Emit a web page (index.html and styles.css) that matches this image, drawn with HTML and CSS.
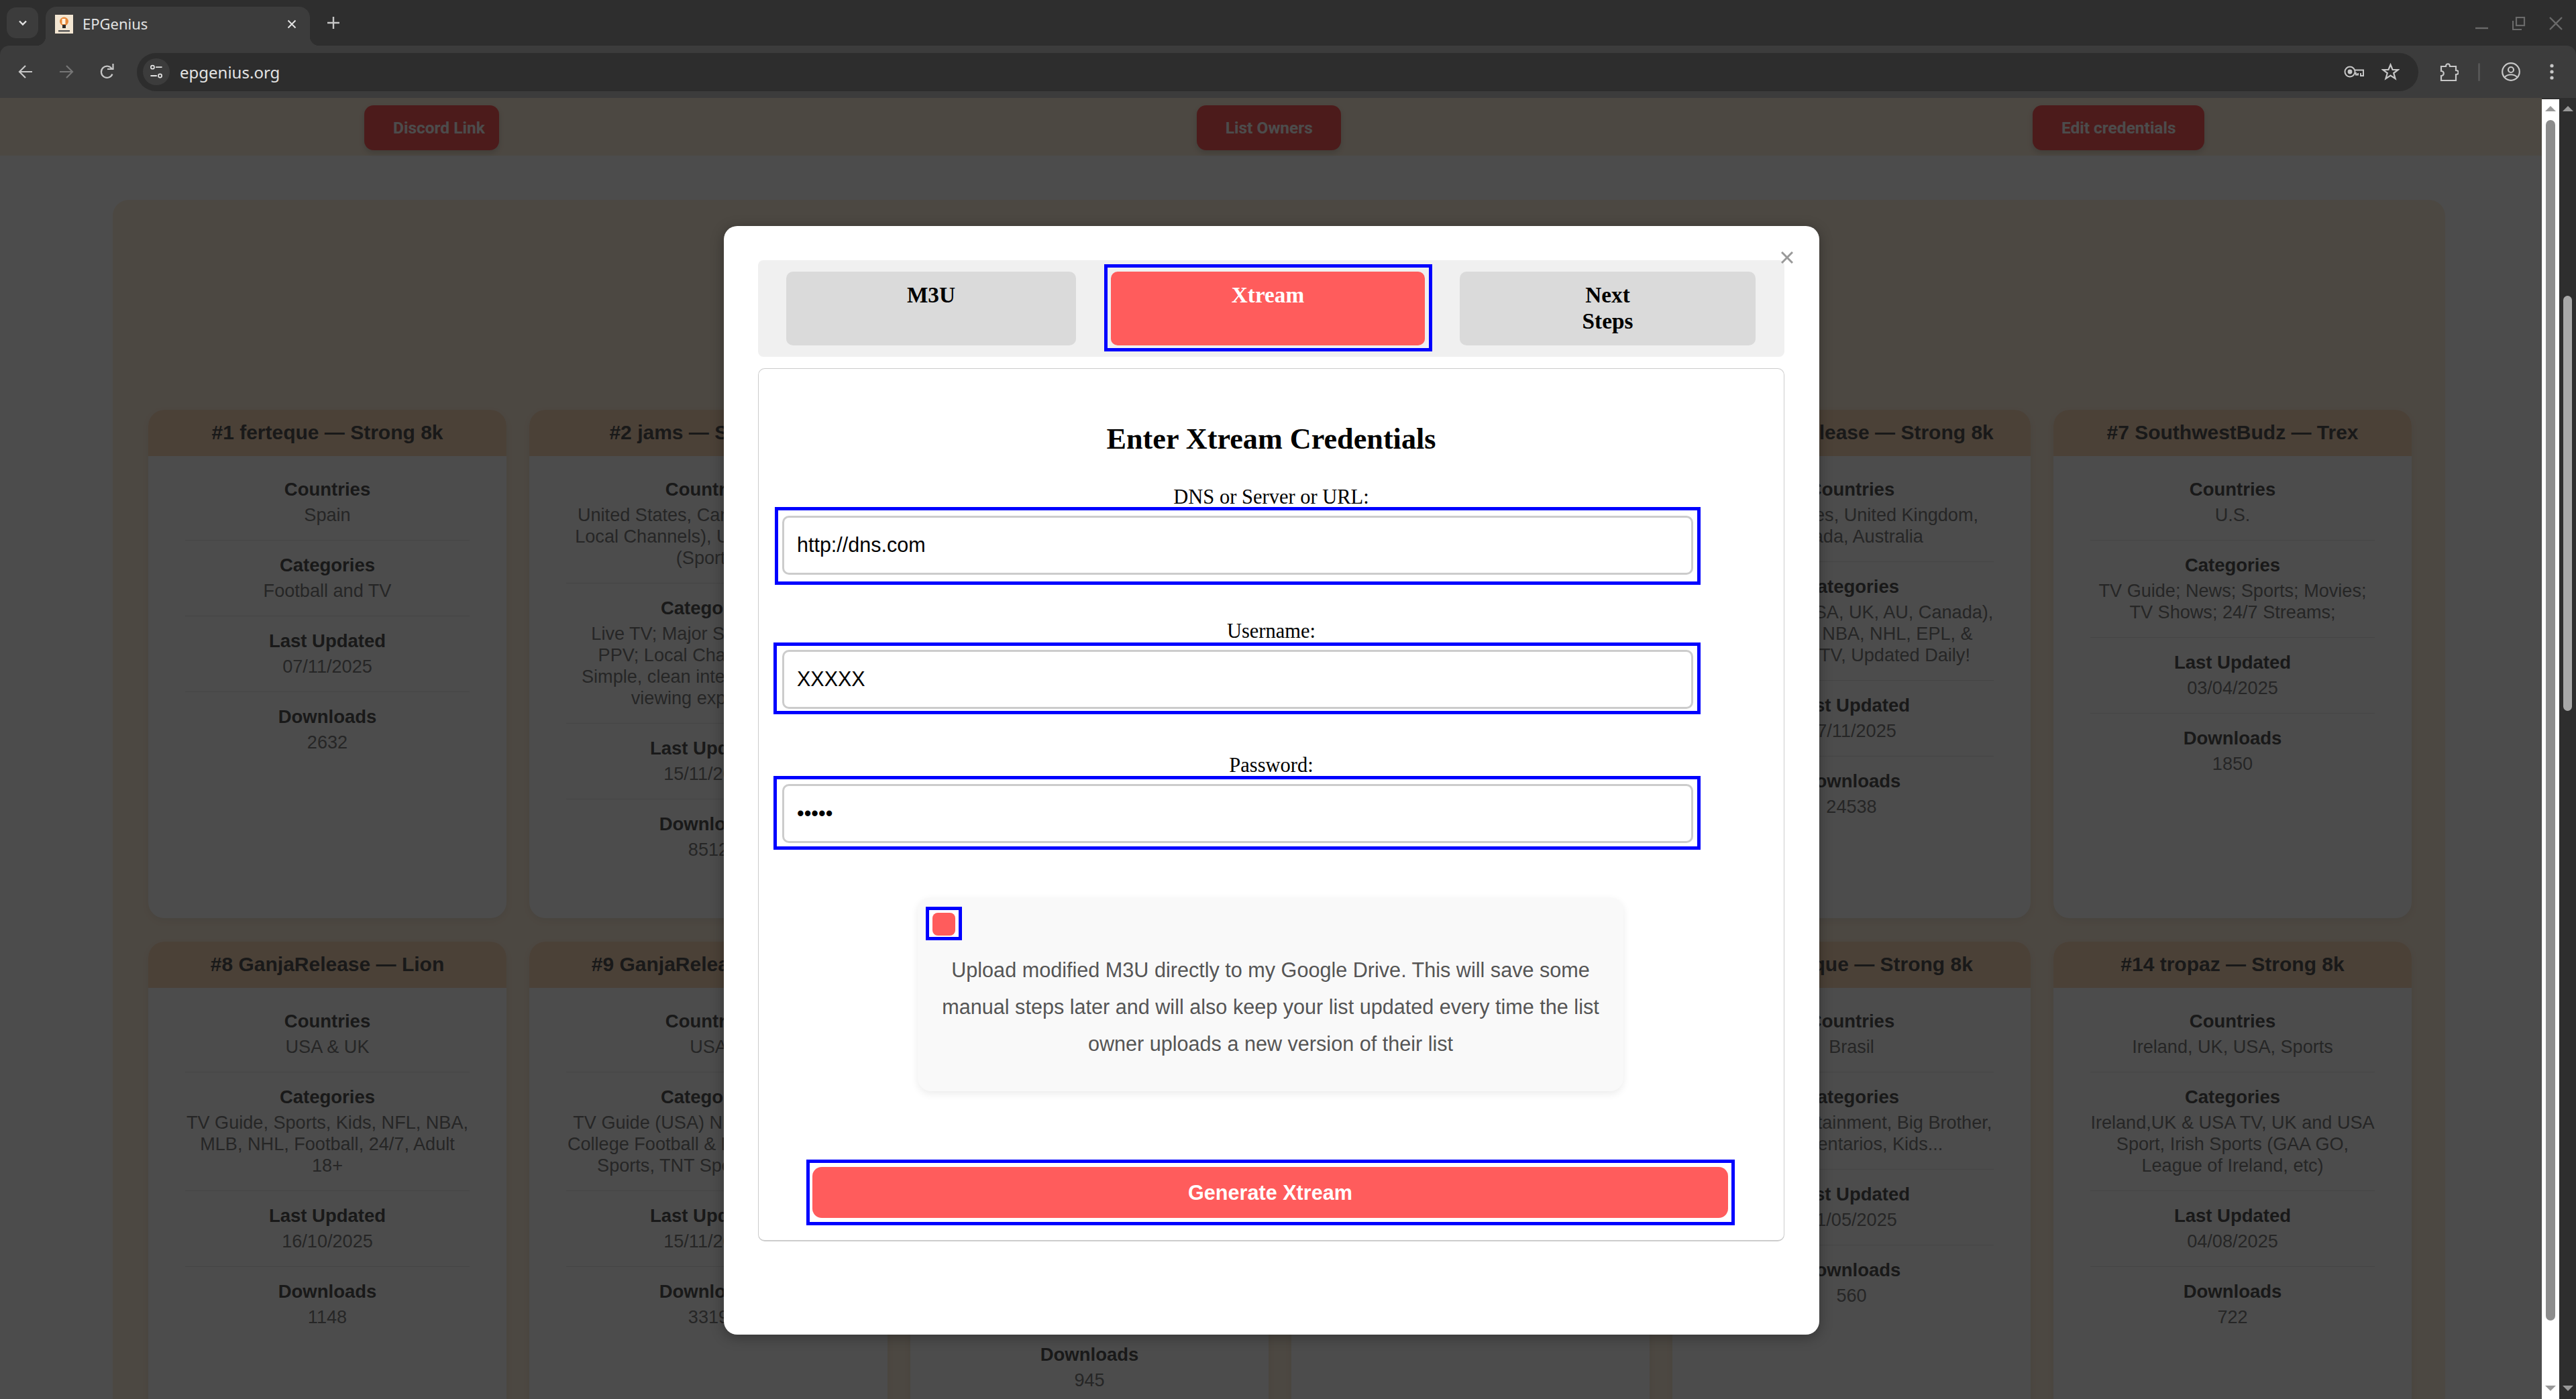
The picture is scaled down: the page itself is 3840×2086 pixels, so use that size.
FILE: index.html
```html
<!DOCTYPE html>
<html lang="en">
<head>
    <meta charset="UTF-8" />
    <title>EPGenius</title>
    <link rel="stylesheet" href="styles.css">
</head>
<body>

    <div class="tabstrip">
        <div class="tab-search">
            <svg width="16" height="16" viewBox="0 0 16 16"><path d="M3 5.5 8 10.5 13 5.5" fill="none" stroke="#e3e3e3" stroke-width="2.4"/></svg>
        </div>
        <div class="tab">
            <svg class="favicon" width="27" height="28" viewBox="0 0 27 28">
                <rect width="27" height="28" fill="#f3e6d2"/>
                <circle cx="13.5" cy="10" r="6.5" fill="#e8893a"/>
                <rect x="10.5" y="6" width="5" height="8" fill="#fff3e0"/>
                <rect x="11" y="15" width="5" height="5" fill="#2b2b2b"/>
                <rect x="5" y="23" width="17" height="2.4" fill="#555"/>
            </svg>
            <span class="tab-title">EPGenius</span>
            <svg class="tab-close" width="14" height="14" viewBox="0 0 14 14"><path d="M1.5 1.5 12.5 12.5M12.5 1.5 1.5 12.5" stroke="#e3e3e3" stroke-width="2"/></svg>
        </div>
        <svg class="new-tab" width="18" height="18" viewBox="0 0 18 18"><path d="M9 0V18M0 9H18" stroke="#c7c7c7" stroke-width="2.4"/></svg>
        <div class="window-controls">
            <svg width="20" height="20" viewBox="0 0 20 20"><path d="M0 17H19" stroke="#6a6a6a" stroke-width="2.4"/></svg>
            <svg width="20" height="20" viewBox="0 0 20 20"><path d="M1 6V19H14" fill="none" stroke="#6a6a6a" stroke-width="2.2"/><rect x="6" y="1" width="12" height="12" fill="none" stroke="#6a6a6a" stroke-width="2.2"/></svg>
            <svg width="20" height="20" viewBox="0 0 20 20"><path d="M1 1 19 19M19 1 1 19" stroke="#6a6a6a" stroke-width="2.4"/></svg>
        </div>
    </div>

    <div class="toolbar">
        <svg class="nav-icon" width="22" height="22" viewBox="0 0 22 22"><path d="M21 11H3M11 2 2 11 11 20" fill="none" stroke="#c7c7c7" stroke-width="2.2"/></svg>
        <svg class="nav-icon" width="22" height="22" viewBox="0 0 22 22"><path d="M1 11H19M11 2 20 11 11 20" fill="none" stroke="#767676" stroke-width="2.2"/></svg>
        <svg class="nav-icon" width="22" height="24" viewBox="0 0 22 24"><path d="M18.5 15.5A8.6 8.6 0 1 1 18 8" fill="none" stroke="#c7c7c7" stroke-width="2.2"/><path d="M11 8H19.5V0" fill="none" stroke="#c7c7c7" stroke-width="2.2"/></svg>
        <div class="omnibox">
            <div class="site-info">
                <svg width="22" height="28" viewBox="0 0 22 28">
                    <circle cx="4.5" cy="6" r="3" fill="none" stroke="#e3e3e3" stroke-width="2"/>
                    <path d="M10 6H21M1 21H12" stroke="#e3e3e3" stroke-width="2.2"/>
                    <circle cx="17.5" cy="21" r="3" fill="none" stroke="#e3e3e3" stroke-width="2"/>
                </svg>
            </div>
            <span class="url">epgenius.org</span>
            <svg class="key-icon" width="30" height="18" viewBox="0 0 30 18">
                <circle cx="9" cy="9" r="7.5" fill="none" stroke="#c7c7c7" stroke-width="2"/>
                <circle cx="9" cy="9" r="3.4" fill="#c7c7c7"/>
                <path d="M16.5 6.5H29V15H25V11M21 11V13.5H18V11H16.5" fill="none" stroke="#c7c7c7" stroke-width="2"/>
            </svg>
            <svg class="star-icon" width="27" height="26" viewBox="0 0 27 26"><path d="M13.5 2.5 16.6 10H24.8L18.2 15 20.6 23.2 13.5 18.5 6.4 23.2 8.8 15 2.2 10H10.4Z" fill="none" stroke="#c7c7c7" stroke-width="2.2"/></svg>
        </div>
        <svg class="ext-icon" width="28" height="30" viewBox="0 0 28 30"><path d="M2 7H9C9 2 15 2 15 7H24V13C29 13 29 19 24 19V28H2V21C7 21 7 14 2 14Z" fill="none" stroke="#c7c7c7" stroke-width="2.2"/></svg>
        <div class="toolbar-sep"></div>
        <svg class="profile-icon" width="28" height="28" viewBox="0 0 28 28">
            <circle cx="14" cy="14" r="12.8" fill="none" stroke="#c7c7c7" stroke-width="2.2"/>
            <circle cx="14" cy="11" r="4" fill="none" stroke="#c7c7c7" stroke-width="2.2"/>
            <path d="M4.5 22C10 17 18 17 23.5 22" fill="none" stroke="#c7c7c7" stroke-width="2.2"/>
        </svg>
        <svg class="menu-icon" width="6" height="24" viewBox="0 0 6 24"><circle cx="3" cy="3" r="2.6" fill="#c7c7c7"/><circle cx="3" cy="12" r="2.6" fill="#c7c7c7"/><circle cx="3" cy="21" r="2.6" fill="#c7c7c7"/></svg>
    </div>

    <div class="viewport">
        <div class="page">
            <nav class="top-band">
                <a class="top-btn discord-btn">Discord Link</a>
                <a class="top-btn owners-btn">List Owners</a>
                <a class="top-btn creds-btn">Edit credentials</a>
            </nav>

            <section class="list-panel">
                <div class="card-grid">

                    <article class="card">
                        <h3 class="card-title">#1 ferteque — Strong 8k</h3>
                        <div class="card-body">
                            <div class="info"><b>Countries</b><span>Spain</span></div>
                            <div class="info"><b>Categories</b><span>Football and TV</span></div>
                            <div class="info"><b>Last Updated</b><span>07/11/2025</span></div>
                            <div class="info"><b>Downloads</b><span>2632</span></div>
                        </div>
                    </article>

                    <article class="card">
                        <h3 class="card-title">#2 jams — Strong 8k</h3>
                        <div class="card-body">
                            <div class="info"><b>Countries</b><span>United States, Canada (with US,<br>Local Channels), UK, Spain, Italy<br>(Sports)</span></div>
                            <div class="info"><b>Categories</b><span>Live TV; Major Sports; News;<br>PPV; Local Channels; VOD<br>Simple, clean interface for easy<br>viewing experience</span></div>
                            <div class="info"><b>Last Updated</b><span>15/11/2025</span></div>
                            <div class="info"><b>Downloads</b><span>8512</span></div>
                        </div>
                    </article>

                    <article class="card"></article>
                    <article class="card"></article>

                    <article class="card">
                        <h3 class="card-title">#6 GanjaRelease — Strong 8k</h3>
                        <div class="card-body">
                            <div class="info"><b>Countries</b><span>United States, United Kingdom,<br>Canada, Australia</span></div>
                            <div class="info"><b>Categories</b><span>Sports TV (USA, UK, AU, Canada),<br>MLB, NFL, NBA, NHL, EPL, &amp;<br>Plus More TV, Updated Daily!</span></div>
                            <div class="info"><b>Last Updated</b><span>07/11/2025</span></div>
                            <div class="info"><b>Downloads</b><span>24538</span></div>
                        </div>
                    </article>

                    <article class="card">
                        <h3 class="card-title">#7 SouthwestBudz — Trex</h3>
                        <div class="card-body">
                            <div class="info"><b>Countries</b><span>U.S.</span></div>
                            <div class="info"><b>Categories</b><span>TV Guide; News; Sports; Movies;<br>TV Shows; 24/7 Streams;</span></div>
                            <div class="info"><b>Last Updated</b><span>03/04/2025</span></div>
                            <div class="info"><b>Downloads</b><span>1850</span></div>
                        </div>
                    </article>

                    <article class="card">
                        <h3 class="card-title">#8 GanjaRelease — Lion</h3>
                        <div class="card-body">
                            <div class="info"><b>Countries</b><span>USA &amp; UK</span></div>
                            <div class="info"><b>Categories</b><span>TV Guide, Sports, Kids, NFL, NBA,<br>MLB, NHL, Football, 24/7, Adult<br>18+</span></div>
                            <div class="info"><b>Last Updated</b><span>16/10/2025</span></div>
                            <div class="info"><b>Downloads</b><span>1148</span></div>
                        </div>
                    </article>

                    <article class="card">
                        <h3 class="card-title">#9 GanjaRelease — Lion</h3>
                        <div class="card-body">
                            <div class="info"><b>Countries</b><span>USA</span></div>
                            <div class="info"><b>Categories</b><span>TV Guide (USA) NFL, NBA, MLB,<br>College Football &amp; Basketball, NFL<br>Sports, TNT Sports, Movies</span></div>
                            <div class="info"><b>Last Updated</b><span>15/11/2025</span></div>
                            <div class="info"><b>Downloads</b><span>3319</span></div>
                        </div>
                    </article>

                    <!-- only the foot of this card shows below the modal -->
                    <article class="card">
                        <div class="card-body card-foot">
                            <div class="info"><b>Downloads</b><span>945</span></div>
                        </div>
                    </article>

                    <article class="card"></article>

                    <article class="card">
                        <h3 class="card-title">#13 ferteque — Strong 8k</h3>
                        <div class="card-body">
                            <div class="info"><b>Countries</b><span>Brasil</span></div>
                            <div class="info"><b>Categories</b><span>Sports, Entertainment, Big Brother,<br>Documentarios, Kids...</span></div>
                            <div class="info"><b>Last Updated</b><span>21/05/2025</span></div>
                            <div class="info"><b>Downloads</b><span>560</span></div>
                        </div>
                    </article>

                    <article class="card">
                        <h3 class="card-title">#14 tropaz — Strong 8k</h3>
                        <div class="card-body">
                            <div class="info"><b>Countries</b><span>Ireland, UK, USA, Sports</span></div>
                            <div class="info"><b>Categories</b><span>Ireland,UK &amp; USA TV, UK and USA<br>Sport, Irish Sports (GAA GO,<br>League of Ireland, etc)</span></div>
                            <div class="info"><b>Last Updated</b><span>04/08/2025</span></div>
                            <div class="info"><b>Downloads</b><span>722</span></div>
                        </div>
                    </article>

                </div>
            </section>

            <div class="overlay">
                <div class="modal">
                    <svg class="modal-close" width="18" height="18" viewBox="0 0 18 18"><path d="M1 1 17 17M17 1 1 17" stroke="#999" stroke-width="3"/></svg>

                    <div class="tab-bar">
                        <button class="mode-tab">M3U</button>
                        <button class="mode-tab active ring ring-tab">Xtream</button>
                        <button class="mode-tab"><span>Next<br>Steps</span></button>
                    </div>

                    <div class="form-panel">
                        <h2>Enter Xtream Credentials</h2>

                        <label class="field-label">DNS or Server or URL:</label>
                        <div class="ring ring-dns"><input class="text-input" type="text" value="http://dns.com"></div>

                        <label class="field-label">Username:</label>
                        <div class="ring ring-user"><input class="text-input" type="text" value="XXXXX"></div>

                        <label class="field-label">Password:</label>
                        <div class="ring ring-pass"><input class="text-input" type="password" value="XXXXX"></div>

                        <div class="drive-box">
                            <span class="check-ring"><input class="drive-check" type="checkbox"></span>
                            <p>Upload modified M3U directly to my Google Drive. This will save some manual steps later and will also keep your list updated every time the list owner uploads a new version of their list</p>
                        </div>

                        <button class="generate-btn ring ring-generate">Generate Xtream</button>
                    </div>
                </div>
            </div>
        </div>

        <div class="scrollbar page-scrollbar">
            <i class="arrow-up"></i>
            <i class="thumb"></i>
            <i class="arrow-down"></i>
        </div>
        <div class="scrollbar window-scrollbar">
            <i class="arrow-up"></i>
            <i class="thumb"></i>
            <i class="arrow-down"></i>
        </div>
    </div>

</body>
</html>
```

FILE: styles.css
```css
* {
    box-sizing: border-box;
}
body {
    margin: 0;
    height: 2086px;
    overflow: hidden;
    display: flex;
    flex-direction: column;
    font-family: "Liberation Sans", Arial, sans-serif;
    background-color: #2e2e2e;
}

/* browser chrome */
.tabstrip {
    height: 68px;
    flex: none;
    display: flex;
    align-items: flex-start;
    background-color: #2e2e2e;
    padding-left: 10px;
}
.tab-search {
    width: 47px;
    height: 46px;
    margin-top: 11px;
    border-radius: 14px;
    background-color: #3c3c3c;
    display: flex;
    align-items: center;
    justify-content: center;
}
.tab {
    width: 394px;
    height: 58px;
    margin: 10px 0 0 11px;
    padding: 0 20px 0 14px;
    border-radius: 16px 16px 0 0;
    background-color: #3c3c3c;
    display: flex;
    align-items: center;
    position: relative;
}
.tab::before, .tab::after {
    content: "";
    position: absolute;
    bottom: 0;
    width: 14px;
    height: 14px;
}
.tab::before {
    left: -14px;
    background: radial-gradient(circle at 0 0, transparent 14px, #3c3c3c 14.5px);
}
.tab::after {
    right: -14px;
    background: radial-gradient(circle at 100% 0, transparent 14px, #3c3c3c 14.5px);
}
.favicon {
    flex: none;
    margin-bottom: 6px;
}
.tab-title {
    margin: 0 0 8px 14px;
    flex: 1;
    color: #e3e3e3;
    font-family: "Noto Sans", sans-serif;
    font-size: 22px;
}
.tab-close {
    margin-bottom: 6px;
}
.new-tab {
    margin: 25px 0 0 26px;
}
.window-controls {
    margin-left: auto;
    margin-top: 25px;
    padding-right: 20px;
    display: flex;
    gap: 35px;
}
.toolbar {
    height: 78px;
    flex: none;
    display: flex;
    align-items: center;
    background-color: #3c3c3c;
    border-radius: 14px 14px 0 0;
    padding: 0 34px 0 27px;
}
.nav-icon {
    flex: none;
    margin-right: 39px;
}
.omnibox {
    width: 3401px;
    height: 57px;
    margin-left: -6px;
    border-radius: 29px;
    background-color: #2d2d2d;
    display: flex;
    align-items: center;
    padding: 0 28px 0 9px;
    flex: none;
}
.site-info {
    width: 40px;
    height: 40px;
    border-radius: 50%;
    background-color: #3c3c3c;
    display: flex;
    align-items: center;
    justify-content: center;
}
.site-info svg {
    width: 20px;
    height: 24px;
}
.url {
    margin-left: 15px;
    flex: 1;
    color: #e3e3e3;
    font-family: "Noto Sans", sans-serif;
    font-size: 24px;
}
.star-icon {
    margin-left: 26px;
}
.ext-icon {
    margin-left: 32px;
    flex: none;
}
.toolbar-sep {
    width: 3px;
    height: 27px;
    margin-left: 29px;
    background-color: #555;
    border-radius: 2px;
    flex: none;
}
.profile-icon {
    margin-left: 32px;
    flex: none;
}
.menu-icon {
    margin-left: 44px;
    flex: none;
}

/* the page */
.viewport {
    flex: 1;
    min-height: 0;
    display: flex;
}
.page {
    flex: 1;
    min-width: 0;
    position: relative;
    overflow: hidden;
    background-color: #fff;
}
.top-band {
    height: 86px;
    background-color: #fff0dc;
    display: flex;
    padding: 11px 0 0 543px;
}
.top-btn {
    height: 67px;
    padding: 0 21px 0 43px;
    border-radius: 14px;
    background-color: #ff5c5c;
    color: #fff;
    font-family: Roboto, sans-serif;
    font-weight: 700;
    font-size: 24.5px;
    line-height: 67px;
    box-shadow: 0 4px 8px rgba(0,0,0,0.15);
    white-space: nowrap;
}
.owners-btn {
    margin-left: 1040px;
    padding-right: 42px;
}
.creds-btn {
    margin-left: 1031px;
    padding-right: 42px;
}
.list-panel {
    margin: 66px 144px 0 168px;
    padding: 313px 50px 0 53px;
    height: 1900px;
    background-color: #fff0dc;
    border-radius: 24px 24px 0 0;
}
.card-grid {
    display: grid;
    grid-template-columns: repeat(6, 534px);
    grid-auto-rows: 758px;
    column-gap: 34px;
    row-gap: 35px;
}
.card {
    background-color: #fff;
    border-radius: 24px;
    overflow: hidden;
    box-shadow: 0 4px 12px rgba(0,0,0,0.06);
}
.card-title {
    margin: 0;
    height: 69px;
    background-color: #fcd9b8;
    color: #555;
    font-size: 30px;
    font-weight: 700;
    line-height: 68px;
    text-align: center;
}
.card-body {
    padding: 34px 55px 0;
    text-align: center;
    font-size: 27.5px;
    line-height: 32px;
}
.card-foot {
    padding-top: 600px;
}
.info {
    padding-bottom: 21px;
    margin-bottom: 21px;
    border-bottom: 1px solid #e6e6e6;
}
.info:last-child {
    border-bottom: none;
}
.info b {
    display: block;
    margin-bottom: 6px;
    color: #555;
}
.info span {
    display: block;
    color: #808080;
    font-size: 27.1px;
    white-space: nowrap;
}

/* dimmed backdrop and modal */
.overlay {
    position: absolute;
    inset: 0;
    background-color: rgba(0,0,0,0.7);
    display: flex;
    justify-content: center;
    align-items: flex-start;
    padding: 191px 0 0 2px;
}
.modal {
    width: 1633px;
    position: relative;
    padding: 51px 52px 139px 51px;
    background-color: #fff;
    border-radius: 20px;
    box-shadow: 0 4px 20px rgba(0,0,0,0.3);
}
.modal-close {
    position: absolute;
    top: 38px;
    right: 39px;
}
.tab-bar {
    height: 144px;
    display: flex;
    gap: 52px;
    padding: 17px 43px 17px 42px;
    background-color: #f0f0f0;
    border-radius: 8px;
}
.mode-tab {
    flex: none;
    width: 432px;
    height: 110px;
    padding: 16px 0 0;
    border: none;
    border-radius: 10px;
    background-color: #dadada;
    color: #000;
    font-family: "Liberation Serif", serif;
    font-weight: 700;
    font-size: 33.3px;
    line-height: 38.5px;
    display: flex;
    justify-content: center;
    align-items: flex-start;
    text-align: center;
}
.mode-tab:last-child {
    width: 441px;
}
.mode-tab.active {
    width: 468px;
    background-color: #ff5c5c;
    color: #fff;
}
.ring {
    position: relative;
}
.ring::after {
    content: "";
    position: absolute;
    border: 5px solid #0000ff;
    pointer-events: none;
}
.ring-tab::after {
    inset: -11px -11px -9px -10px;
}
.ring-dns::after {
    inset: -13px -11px -15px -11px;
}
.ring-user::after {
    inset: -11px -11px -8px -13px;
}
.ring-pass::after {
    inset: -12px -11px -10px -13px;
}
.ring-generate::after {
    inset: -11px -10px -11px -9px;
}
.form-panel {
    margin-top: 17px;
    height: 1302px;
    padding: 79px 0 0 35px;
    border: 1px solid #ccc;
    border-bottom-width: 2px;
    border-radius: 10px;
    font-family: "Liberation Serif", serif;
}
.form-panel h2 {
    margin: 0 0 43px -35px;
    font-size: 44.2px;
    line-height: 52px;
    text-align: center;
}
.field-label {
    display: block;
    margin: 0 0 11px -35px;
    font-size: 30.5px;
    line-height: 34px;
    text-align: center;
}
.form-panel .ring {
    width: 1358px;
    height: 88px;
    margin-bottom: 67px;
}
.text-input {
    display: block;
    width: 100%;
    height: 100%;
    padding: 0 19px 2px;
    border: 3px solid #ccc;
    border-radius: 10px;
    background-color: #fff;
    color: #000;
    font-family: "Liberation Sans", sans-serif;
    font-size: 30.5px;
}
.form-panel .ring-pass {
    margin-bottom: 81px;
}
.drive-box {
    width: 1052px;
    margin-left: 202px;
    padding: 14px 12px 43px;
    background-color: #f9f9f9;
    border-radius: 20px;
    box-shadow: 0 4px 12px rgba(0,0,0,0.08);
    font-family: "Liberation Sans", sans-serif;
}
.check-ring {
    display: flex;
    width: 54px;
    height: 50px;
    padding: 4px 0 0 5px;
    border: 5px solid #0000ff;
    background-color: #fff;
}
.drive-check {
    appearance: none;
    flex: none;
    width: 34px;
    height: 34px;
    margin: 0;
    border-radius: 8px;
    background-color: #ff5c5c;
}
.drive-box p {
    margin: 17px 0 0;
    color: #555;
    font-size: 30.6px;
    line-height: 55px;
    text-align: center;
}
.form-panel .generate-btn {
    display: block;
    width: 1365px;
    height: 76px;
    margin: 113px 0 0 45px;
    border: none;
    border-radius: 14px;
    background-color: #ff5c5c;
    color: #fff;
    font-family: "Liberation Sans", sans-serif;
    font-weight: 700;
    font-size: 30.6px;
}

/* scrollbars */
.scrollbar {
    flex: none;
    display: flex;
    flex-direction: column;
    align-items: center;
    margin-top: 2px;
    padding: 10px 0 12px;
}
.page-scrollbar {
    width: 26px;
    background-color: #fff;
}
.window-scrollbar {
    width: 25px;
    background-color: #2e2e2e;
}
.arrow-up, .arrow-down {
    width: 0;
    height: 0;
    border-left: 8px solid transparent;
    border-right: 8px solid transparent;
}
.arrow-up {
    border-bottom: 8px solid #999;
}
.arrow-down {
    margin-top: auto;
    border-top: 8px solid #999;
}
.thumb {
    width: 14px;
    border-radius: 7px;
    background-color: #8c8c8c;
}
.page-scrollbar .thumb {
    height: 1790px;
    margin-top: 13px;
}
.window-scrollbar .thumb {
    width: 13px;
    height: 619px;
    margin-top: 275px;
    background-color: #a8a8a8;
}
```
